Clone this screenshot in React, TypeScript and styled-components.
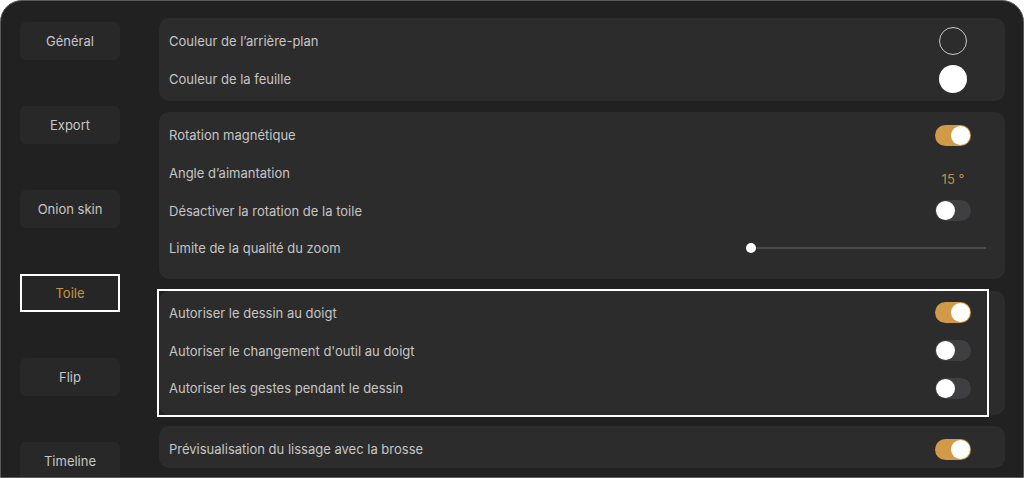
import * as React from 'react';
import styled, { createGlobalStyle } from 'styled-components';

const GlobalStyle = createGlobalStyle`
  html, body {
    margin: 0;
    padding: 0;
    background: #ffffff;
  }
  body {
    font-family: Inter, "Noto Sans", "Liberation Sans", sans-serif;
    -webkit-font-smoothing: antialiased;
  }
`;

const Frame = styled.div`
  box-sizing: border-box;
  width: 1024px;
  height: 478px;
  border: 1px solid #5a5a5a;
  border-radius: 22px 22px 0 0;
  background: #212121;
  display: flex;
  overflow: hidden;
`;

const Sidebar = styled.nav`
  display: flex;
  flex-direction: column;
  gap: 46px;
  padding: 21px 0 0 19px;
`;

const NavButton = styled.div<{ $active?: boolean }>`
  box-sizing: border-box;
  width: 100px;
  height: 38px;
  flex-shrink: 0;
  display: flex;
  align-items: center;
  justify-content: center;
  border-radius: ${(p) => (p.$active ? '0' : '6px')};
  background: ${(p) => (p.$active ? '#262626' : '#282828')};
  outline: ${(p) => (p.$active ? '2px solid #ffffff' : 'none')};
  outline-offset: -2px;
  color: ${(p) => (p.$active ? '#c8953f' : '#c6c6c6')};
  font-size: 13px;
`;

const Main = styled.main`
  display: flex;
  flex-direction: column;
  gap: 11px;
  width: 846px;
  margin-left: 39px;
  padding-top: 17px;
`;

const Panel = styled.section<{ $pad?: string; $offset?: number }>`
  position: relative;
  box-sizing: border-box;
  background: #2c2c2c;
  border-radius: 10px;
  padding: ${(p) => p.$pad || '4px 0'};
  margin-top: ${(p) => p.$offset || 0}px;
  display: flex;
  flex-direction: column;
`;

const Highlight = styled.div`
  position: absolute;
  left: -2px;
  top: -2px;
  right: 16px;
  bottom: -2px;
  border: 2px solid #ffffff;
  pointer-events: none;
`;

const Row = styled.div`
  height: 37.7px;
  display: flex;
  align-items: center;
  padding-left: 10px;
`;

const Label = styled.span`
  flex: 1;
  color: #c6c6c6;
  font-size: 13px;
`;

const Control = styled.div`
  width: 36px;
  margin-right: 34px;
  display: flex;
  justify-content: center;
`;

const Swatch = styled.div<{ $filled?: boolean }>`
  box-sizing: border-box;
  width: 28px;
  height: 28px;
  border-radius: 50%;
  background: ${(p) => (p.$filled ? '#ffffff' : 'transparent')};
  border: ${(p) => (p.$filled ? 'none' : '1.5px solid #c8c8c8')};
`;

const Track = styled.div<{ $on?: boolean }>`
  position: relative;
  width: 36px;
  height: 21px;
  border-radius: 11px;
  background: ${(p) => (p.$on ? '#d19a48' : '#3f3f41')};
`;

const Knob = styled.div<{ $on?: boolean }>`
  position: absolute;
  top: 1px;
  left: ${(p) => (p.$on ? '16px' : '1px')};
  width: 19px;
  height: 19px;
  border-radius: 50%;
  background: #ffffff;
`;

const Value = styled.span`
  color: #c18e45;
  font-size: 13px;
  margin-top: 12px;
  white-space: nowrap;
`;

const Slider = styled.div`
  position: relative;
  width: 240px;
  height: 10px;
  margin-right: 19px;
`;

const SliderLine = styled.div`
  position: absolute;
  left: 5px;
  right: 0;
  top: 4px;
  height: 2px;
  background: #4a4a4a;
`;

const SliderThumb = styled.div`
  position: absolute;
  left: 0;
  top: 0;
  width: 10px;
  height: 10px;
  border-radius: 50%;
  background: #ffffff;
`;

const Toggle = ({ on }: { on?: boolean }) => (
  <Control>
    <Track $on={on}>
      <Knob $on={on} />
    </Track>
  </Control>
);

const navItems = ['Général', 'Export', 'Onion skin', 'Toile', 'Flip', 'Timeline'];

export default function App() {
  return (
    <>
      <GlobalStyle />
      <Frame>
        <Sidebar>
          {navItems.map((item) => (
            <NavButton key={item} $active={item === 'Toile'}>
              {item}
            </NavButton>
          ))}
        </Sidebar>
        <Main>
          <Panel>
            <Row>
              <Label>Couleur de l’arrière-plan</Label>
              <Control>
                <Swatch />
              </Control>
            </Row>
            <Row>
              <Label>Couleur de la feuille</Label>
              <Control>
                <Swatch $filled />
              </Control>
            </Row>
          </Panel>

          <Panel $pad="4px 0 12px">
            <Row>
              <Label>Rotation magnétique</Label>
              <Toggle on />
            </Row>
            <Row>
              <Label>Angle d’aimantation</Label>
              <Control>
                <Value>15 °</Value>
              </Control>
            </Row>
            <Row>
              <Label>Désactiver la rotation de la toile</Label>
              <Toggle />
            </Row>
            <Row>
              <Label>Limite de la qualité du zoom</Label>
              <Slider>
                <SliderLine />
                <SliderThumb />
              </Slider>
            </Row>
          </Panel>

          <Panel $pad="3px 0 8px" $offset={1}>
            <Row>
              <Label>Autoriser le dessin au doigt</Label>
              <Toggle on />
            </Row>
            <Row>
              <Label>Autoriser le changement d'outil au doigt</Label>
              <Toggle />
            </Row>
            <Row>
              <Label>Autoriser les gestes pendant le dessin</Label>
              <Toggle />
            </Row>
            <Highlight />
          </Panel>

          <Panel $pad="4px 0 0">
            <Row>
              <Label>Prévisualisation du lissage avec la brosse</Label>
              <Toggle on />
            </Row>
          </Panel>
        </Main>
      </Frame>
    </>
  );
}
